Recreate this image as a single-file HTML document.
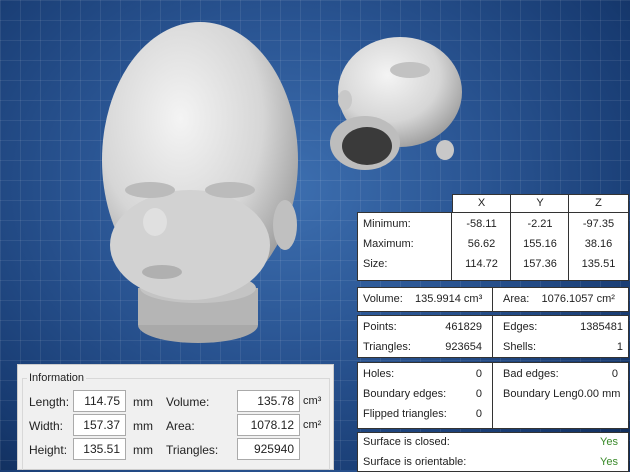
<!DOCTYPE html><html><head><style>
body{margin:0;width:630px;height:470px;overflow:hidden;position:relative;font-family:"Liberation Sans",sans-serif;font-size:11px;color:#222;
background:radial-gradient(ellipse at 45% 40%,#3d6fb0 0%,#2a5593 40%,#173a70 80%,#0f2a55 100%);}
.grid{position:absolute;inset:0;background-image:linear-gradient(rgba(255,255,255,.08) 1px,transparent 1px),linear-gradient(90deg,rgba(255,255,255,.08) 1px,transparent 1px);background-size:20px 20px}
.b{position:absolute;background:#fff;border:1px solid #333;box-sizing:border-box}
.t{position:absolute;white-space:nowrap}
.r{text-align:right}
.in{position:absolute;background:#fff;border:1px solid #aaa;box-sizing:border-box;text-align:right;padding-right:5px;height:22px;line-height:20px;font-size:12px}
.lb{position:absolute;font-size:12px}
</style></head><body><div class="grid"></div>
<svg style="position:absolute;left:0;top:0" width="630" height="470">
<defs><radialGradient id="g" cx="40%" cy="35%" r="70%"><stop offset="0" stop-color="#f4f4f4"/><stop offset=".6" stop-color="#d6d6d6"/><stop offset="1" stop-color="#9a9a9a"/></radialGradient></defs>
<ellipse cx="198" cy="325" rx="60" ry="18" fill="#a9a9a9"/>
<rect x="138" y="288" width="120" height="37" fill="#b5b5b5"/>
<ellipse cx="198" cy="288" rx="58" ry="15" fill="#c4c4c4"/>
<ellipse cx="200" cy="160" rx="98" ry="138" fill="url(#g)"/>
<ellipse cx="190" cy="245" rx="80" ry="55" fill="#d2d2d2"/>
<ellipse cx="285" cy="225" rx="12" ry="25" fill="#c0c0c0"/>
<ellipse cx="150" cy="190" rx="25" ry="8" fill="#bbb"/><ellipse cx="230" cy="190" rx="25" ry="8" fill="#bbb"/>
<ellipse cx="155" cy="222" rx="12" ry="14" fill="#e0e0e0"/>
<ellipse cx="162" cy="272" rx="20" ry="7" fill="#b0b0b0"/>
<ellipse cx="400" cy="92" rx="62" ry="55" fill="url(#g)"/>
<ellipse cx="365" cy="143" rx="35" ry="27" fill="#bdbdbd"/>
<ellipse cx="367" cy="146" rx="25" ry="19" fill="#3a3a3a"/>
<ellipse cx="445" cy="150" rx="9" ry="10" fill="#c8c8c8"/>
<ellipse cx="345" cy="100" rx="7" ry="10" fill="#c8c8c8"/>
<ellipse cx="410" cy="70" rx="20" ry="8" fill="#c2c2c2"/>
</svg>
<div class="b" style="left:452px;top:194px;width:177px;height:20px"></div>
<div class="t" style="left:452px;top:197px;width:59px;text-align:center">X</div>
<div class="t" style="left:511px;top:197px;width:58px;text-align:center">Y</div>
<div class="t" style="left:569px;top:197px;width:59px;text-align:center">Z</div>
<div class="b" style="left:357px;top:212px;width:272px;height:69px"></div>
<div style="position:absolute;left:451px;top:212px;width:1px;height:69px;background:#333"></div>
<div style="position:absolute;left:510px;top:194px;width:1px;height:87px;background:#333"></div>
<div style="position:absolute;left:568px;top:194px;width:1px;height:87px;background:#333"></div>
<div class="t" style="left:363px;top:218px">Minimum:</div><div class="t" style="left:363px;top:238px">Maximum:</div><div class="t" style="left:363px;top:258px">Size:</div>
<div class="t" style="left:452px;top:218px;width:59px;text-align:center">-58.11</div><div class="t" style="left:511px;top:218px;width:58px;text-align:center">-2.21</div><div class="t" style="left:569px;top:218px;width:59px;text-align:center">-97.35</div>
<div class="t" style="left:452px;top:238px;width:59px;text-align:center">56.62</div><div class="t" style="left:511px;top:238px;width:58px;text-align:center">155.16</div><div class="t" style="left:569px;top:238px;width:59px;text-align:center">38.16</div>
<div class="t" style="left:452px;top:258px;width:59px;text-align:center">114.72</div><div class="t" style="left:511px;top:258px;width:58px;text-align:center">157.36</div><div class="t" style="left:569px;top:258px;width:59px;text-align:center">135.51</div>
<div class="b" style="left:357px;top:287px;width:272px;height:25px"></div>
<div style="position:absolute;left:492px;top:287px;width:1px;height:25px;background:#333"></div>
<div class="t" style="left:363px;top:293px">Volume:&nbsp;&nbsp;&nbsp; 135.9914 cm³</div>
<div class="t" style="left:503px;top:293px">Area:&nbsp;&nbsp;&nbsp; 1076.1057 cm²</div>
<div class="b" style="left:357px;top:315px;width:272px;height:43px"></div>
<div style="position:absolute;left:492px;top:315px;width:1px;height:43px;background:#333"></div>
<div class="t" style="left:363px;top:321px">Points:</div><div class="t r" style="left:420px;top:321px;width:62px">461829</div>
<div class="t" style="left:363px;top:341px">Triangles:</div><div class="t r" style="left:420px;top:341px;width:62px">923654</div>
<div class="t" style="left:503px;top:321px">Edges:</div><div class="t r" style="left:550px;top:321px;width:73px">1385481</div>
<div class="t" style="left:503px;top:341px">Shells:</div><div class="t r" style="left:550px;top:341px;width:73px">1</div>
<div class="b" style="left:357px;top:362px;width:272px;height:67px"></div>
<div style="position:absolute;left:492px;top:362px;width:1px;height:67px;background:#333"></div>
<div class="t" style="left:363px;top:368px">Holes:</div><div class="t r" style="left:440px;top:368px;width:42px">0</div>
<div class="t" style="left:363px;top:388px">Boundary edges:</div><div class="t r" style="left:440px;top:388px;width:42px">0</div>
<div class="t" style="left:363px;top:408px">Flipped triangles:</div><div class="t r" style="left:440px;top:408px;width:42px">0</div>
<div class="t" style="left:503px;top:368px">Bad edges:</div><div class="t r" style="left:580px;top:368px;width:38px">0</div>
<div class="t" style="left:503px;top:388px">Boundary Leng0.00 mm</div>
<div class="b" style="left:357px;top:432px;width:272px;height:40px"></div>
<div class="t" style="left:363px;top:436px">Surface is closed:</div><div class="t r" style="left:560px;top:436px;width:58px;color:#3a8a2a">Yes</div>
<div class="t" style="left:363px;top:456px">Surface is orientable:</div><div class="t r" style="left:560px;top:456px;width:58px;color:#3a8a2a">Yes</div>
<div style="position:absolute;left:17px;top:364px;width:317px;height:106px;background:#f0f0f0;border:1px solid #ccc;box-sizing:border-box"></div>
<div style="position:absolute;left:22px;top:378px;width:308px;height:92px;border:1px solid #d8d8d8;border-bottom:none;box-sizing:border-box"></div>
<div class="t" style="left:27px;top:372px;background:#f0f0f0;padding:0 2px">Information</div>
<div class="lb" style="left:29px;top:395px">Length:</div><div class="in" style="left:73px;top:390px;width:53px">114.75</div><div class="lb" style="left:133px;top:395px">mm</div>
<div class="lb" style="left:29px;top:419px">Width:</div><div class="in" style="left:73px;top:414px;width:53px">157.37</div><div class="lb" style="left:133px;top:419px">mm</div>
<div class="lb" style="left:29px;top:443px">Height:</div><div class="in" style="left:73px;top:438px;width:53px">135.51</div><div class="lb" style="left:133px;top:443px">mm</div>
<div class="lb" style="left:166px;top:395px">Volume:</div><div class="in" style="left:237px;top:390px;width:63px">135.78</div><div class="lb" style="left:303px;top:395px;font-size:11px">cm³</div>
<div class="lb" style="left:166px;top:419px">Area:</div><div class="in" style="left:237px;top:414px;width:63px">1078.12</div><div class="lb" style="left:303px;top:419px;font-size:11px">cm²</div>
<div class="lb" style="left:166px;top:443px">Triangles:</div><div class="in" style="left:237px;top:438px;width:63px">925940</div>
</body></html>
